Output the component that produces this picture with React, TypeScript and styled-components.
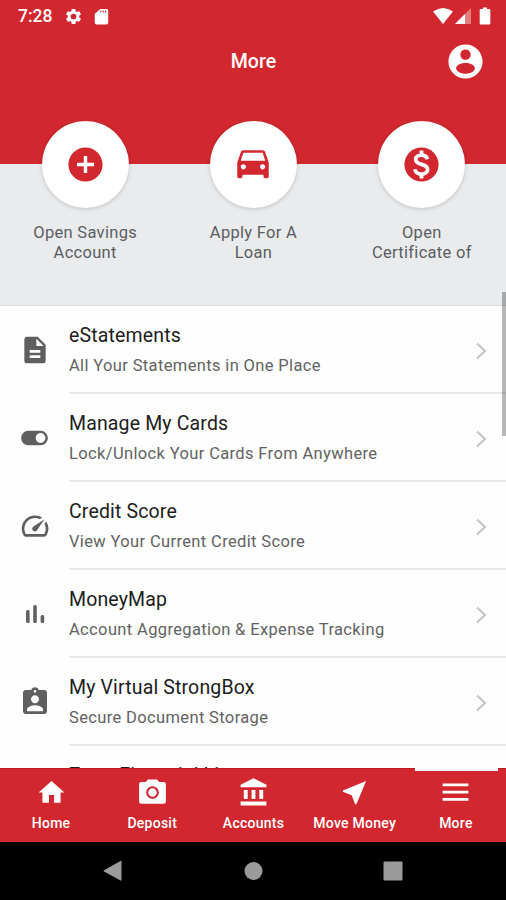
import React from 'react';
import styled, { createGlobalStyle } from 'styled-components';

const RED = '#d3272f';

const GlobalStyle = createGlobalStyle`
  *, *::before, *::after { box-sizing: border-box; }
  body { margin: 0; font-family: Roboto, "Liberation Sans", sans-serif; background: #fff; }
`;

const Screen = styled.div`
  width: 506px;
  height: 900px;
  display: flex;
  flex-direction: column;
  overflow: hidden;
  position: relative;
  background: #fefefe;
`;

const Header = styled.header`
  flex: none;
  height: 164px;
  background: ${RED};
  color: #fff;
`;

const StatusBar = styled.div`
  height: 32px;
  padding: 0 15px 0 18px;
  display: flex;
  align-items: center;
  justify-content: space-between;
`;

const StatusGroup = styled.div<{ $gap: number }>`
  display: flex;
  align-items: center;
  gap: ${(p) => p.$gap}px;
`;

const Clock = styled.span`
  font-size: 17.5px;
  font-weight: 500;
  line-height: 20px;
  margin-right: 3px;
`;

const TitleBar = styled.div`
  height: 58px;
  padding: 0 20px;
  display: grid;
  grid-template-columns: 41px 1fr 41px;
  align-items: center;
`;

const Title = styled.h1`
  margin: 2px 0 0 1px;
  grid-column: 2;
  text-align: center;
  font-size: 19.5px;
  line-height: 24px;
  font-weight: 500;
  letter-spacing: 0.1px;
`;

const Icon = styled.svg<{ $size: number; $color?: string }>`
  display: block;
  flex: none;
  width: ${(p) => p.$size}px;
  height: ${(p) => p.$size}px;
  fill: ${(p) => p.$color ?? 'currentColor'};
`;

const Shortcuts = styled.section`
  flex: none;
  height: 142px;
  background: #e9ebed;
  border-bottom: 1px solid #dcdddf;
  display: grid;
  grid-template-columns: repeat(3, 1fr);
  padding-left: 1px;
`;

const Shortcut = styled.div`
  display: flex;
  flex-direction: column;
  align-items: center;
  margin-top: -43px;
`;

const Disc = styled.div`
  width: 87px;
  height: 87px;
  border-radius: 50%;
  background: #fff;
  display: flex;
  align-items: center;
  justify-content: center;
  box-shadow: 0 1px 4px rgba(0, 0, 0, 0.18);
`;

const ShortcutLabel = styled.div`
  margin-top: 15px;
  text-align: center;
  white-space: pre-line;
  font-size: 16.5px;
  line-height: 20px;
  letter-spacing: 0.3px;
  color: #5b5d60;
`;

const List = styled.main`
  flex: 1;
  min-height: 0;
  overflow: hidden;
`;

const Row = styled.div`
  display: flex;
  height: 88px;
`;

const RowIcon = styled.div`
  width: 69px;
  flex: none;
  display: flex;
  align-items: center;
  justify-content: center;
`;

const RowBody = styled.div`
  flex: 1;
  display: flex;
  align-items: center;
  justify-content: space-between;
  padding: 3px 14px 0 0;
  border-bottom: 2px solid #e8e8e8;
`;

const RowTitle = styled.div`
  font-size: 19.5px;
  line-height: 24px;
  letter-spacing: 0.15px;
  color: #1c1c1c;
  white-space: nowrap;
`;

const RowNote = styled.div`
  margin-top: 7px;
  font-size: 16.5px;
  line-height: 22px;
  letter-spacing: 0.36px;
  color: #626262;
  white-space: nowrap;
`;

const ScrollThumb = styled.div`
  position: absolute;
  right: 0;
  top: 292px;
  width: 4px;
  height: 144px;
  background: rgba(0, 0, 0, 0.28);
`;

const Tabs = styled.nav`
  flex: none;
  height: 74px;
  background: ${RED};
  border-top: 1px solid #bd1a22;
  color: #fff;
  display: grid;
  grid-template-columns: repeat(5, 1fr);
`;

const Tab = styled.div<{ $active?: boolean }>`
  display: flex;
  flex-direction: column;
  align-items: center;
  padding: 8px 0 0 1px;
  position: relative;
  &::before {
    content: '';
    display: ${(p) => (p.$active ? 'block' : 'none')};
    position: absolute;
    top: -1px;
    left: 10px;
    right: 8px;
    height: 3px;
    background: #fff;
  }
`;

const TabLabel = styled.span`
  margin-top: 6px;
  font-size: 14px;
  font-weight: 500;
  line-height: 18px;
  letter-spacing: 0.25px;
  white-space: nowrap;
`;

const SystemNav = styled.footer`
  flex: none;
  height: 58px;
  background: #000;
  display: flex;
  gap: 116px;
  align-items: center;
  justify-content: center;
`;

const PATHS = {
  settings:
    'M19.14 12.94c.04-.3.06-.61.06-.94 0-.32-.02-.64-.07-.94l2.03-1.58c.18-.14.23-.41.12-.61l-1.92-3.32c-.12-.22-.37-.29-.59-.22l-2.39.96c-.5-.38-1.03-.7-1.62-.94l-.36-2.54c-.04-.24-.24-.41-.48-.41h-3.84c-.24 0-.43.17-.47.41l-.36 2.54c-.59.24-1.13.57-1.62.94l-2.39-.96c-.22-.08-.47 0-.59.22L2.74 8.87c-.12.21-.08.47.12.61l2.03 1.58c-.05.3-.09.63-.09.94s.02.64.07.94l-2.03 1.58c-.18.14-.23.41-.12.61l1.92 3.32c.12.22.37.29.59.22l2.39-.96c.5.38 1.03.7 1.62.94l.36 2.54c.05.24.24.41.48.41h3.84c.24 0 .44-.17.47-.41l.36-2.54c.59-.24 1.13-.56 1.62-.94l2.39.96c.22.08.47 0 .59-.22l1.92-3.32c.12-.22.07-.47-.12-.61zM12 15.6A3.6 3.6 0 1 1 12 8.4a3.6 3.6 0 0 1 0 7.2z',
  sdCard: 'M18.500 2.500h-8L3.500 8.500v11.500c0 1.100.9 2 2 2h13c1.100 0 2-.9 2-2V4.500c0-1.100-.9-2-2-2zM10.500 4.500h1.400v2.500h-1.400zm3 0h1.400v2.500h-1.400zm3 0h1.400v2.500h-1.400z',
  account:
    'M12 2C6.48 2 2 6.48 2 12s4.48 10 10 10 10-4.48 10-10S17.52 2 12 2zm0 3c1.66 0 3 1.34 3 3s-1.34 3-3 3-3-1.34-3-3 1.34-3 3-3zm0 14.2c-2.500 0-5.500-1.28-5.500-3.220.030-1.990 3.200-3.080 5.500-3.080s5.470 1.090 5.500 3.080c0 1.940-3 3.220-5.500 3.220z',
  addCircle: 'M12 2C6.48 2 2 6.48 2 12s4.48 10 10 10 10-4.48 10-10S17.52 2 12 2zm5 11h-4v4h-2v-4H7v-2h4V7h2v4h4v2z',
  car: 'M18.920 4.510C18.720 3.920 18.160 3.500 17.500 3.500h-11c-.66 0-1.210.42-1.420 1.010L3 10.500v8c0 .55.45 1 1 1h1c.55 0 1-.45 1-1v-1h12v1c0 .55.45 1 1 1h1c.55 0 1-.45 1-1v-8l-2.080-5.990zM6.500 14.500c-.83 0-1.500-.67-1.500-1.500s.67-1.500 1.500-1.500 1.500.67 1.500 1.500-.67 1.500-1.500 1.500zm11 0c-.83 0-1.500-.67-1.500-1.500s.67-1.500 1.500-1.500 1.500.67 1.500 1.500-.67 1.500-1.500 1.500zM5 9.500l1.500-4.500h11L19 9.500H5z',
  document: 'M14 2H6c-1.1 0-1.99.9-1.99 2L4 20c0 1.1.89 2 1.99 2H18c1.1 0 2-.9 2-2V8l-6-6zm2 16H8v-2h8v2zm0-4H8v-2h8v2zm-3-5V3.5L18.5 9H13z',
  toggle: 'M17 5.500H7c-3.310 0-6 2.690-6 6s2.690 6 6 6h10c3.310 0 6-2.690 6-6s-2.690-6-6-6zm0 10c-2.210 0-4-1.790-4-4s1.790-4 4-4 4 1.790 4 4-1.790 4-4 4z',
  speed: 'M20.38 8.57l-1.23 1.85a8 8 0 0 1-.22 7.58H5.07A8 8 0 0 1 15.58 6.85l1.85-1.23A10 10 0 0 0 3.35 19a2 2 0 0 0 1.72 1h13.85a2 2 0 0 0 1.74-1 10 10 0 0 0-.27-10.44zm-9.79 6.84a2 2 0 0 0 2.83 0l5.66-8.49-8.49 5.66a2 2 0 0 0 0 2.83z',
  badge:
    'M19 3h-4.18C14.4 1.84 13.3 1 12 1c-1.3 0-2.4.84-2.82 2H5c-1.1 0-2 .9-2 2v14c0 1.1.9 2 2 2h14c1.1 0 2-.9 2-2V5c0-1.1-.9-2-2-2zm-7 0c.55 0 1 .45 1 1s-.45 1-1 1-1-.45-1-1 .45-1 1-1zm0 4c1.66 0 3 1.34 3 3s-1.34 3-3 3-3-1.34-3-3 1.34-3 3-3zm6 12H6v-1.4c0-2 4-3.1 6-3.1s6 1.1 6 3.1V19z',
  home: 'M10 20v-6h4v6h5v-8h3L12 3 2 12h3v8z',
  bank: 'M4.500 10v7h3v-7h-3zm6 0v7h3v-7h-3zM2 22h20v-3H2v3zm14.500-12v7h3v-7h-3zM12 1L2 6v2h20V6L12 1z',
  near: 'M21 3L3 10.530v.980l6.840 2.650L12.480 21h.980L21 3z',
  menu: 'M2 5h20v2.200H2zM2 10.600h20v2.200H2zM2 16.200h20v2.200H2z',
};

type IconName = keyof typeof PATHS;

const Glyph = ({ name, size, color }: { name: IconName; size: number; color?: string }) => (
  <Icon viewBox="0 0 24 24" $size={size} $color={color}>
    <path fillRule="evenodd" d={PATHS[name]} />
  </Icon>
);

const DollarIcon = () => (
  <Icon viewBox="0 0 24 24" $size={41} $color={RED}>
    <circle cx="12" cy="12" r="10" />
    <path
      d="M15.500 8.900C15 7.200 13.800 6.500 12 6.500c-2 0-3.400 1-3.400 2.500 0 3.700 7 2.200 7 5.900 0 1.700-1.500 2.700-3.600 2.700-2.200 0-3.600-1-3.900-2.800M12 3.800v3M12 17.200v3"
      fill="none"
      stroke="#fff"
      strokeWidth="2.200"
    />
  </Icon>
);

const BarsIcon = () => (
  <Icon viewBox="0 0 24 24" $size={24} $color="#616161">
    <rect x="3" y="8" width="3.600" height="13" rx="1.500" />
    <rect x="10.200" y="3" width="3.600" height="18" rx="1.500" />
    <rect x="17.600" y="13" width="3.600" height="8" rx="1.500" />
  </Icon>
);

const CameraIcon = () => (
  <Icon viewBox="0 0 31 31" $size={31}>
    <path d="M11 2.500h9l2.300 2.500h4.400a2.200 2.200 0 0 1 2.200 2.200V24.500a2.200 2.200 0 0 1-2.200 2.200H4.300a2.200 2.200 0 0 1-2.200-2.200V7.200A2.200 2.200 0 0 1 4.300 5h4.400z" />
    <circle cx="15.500" cy="15.500" r="5.300" fill="none" stroke={RED} strokeWidth="2.100" />
  </Icon>
);

const Wifi = styled.svg`
  width: 20px;
  height: 16px;
  fill: #fff;
`;
const Signal = styled.svg`
  width: 16px;
  height: 16px;
  fill: #fff;
`;
const Battery = styled.svg`
  width: 12px;
  height: 18px;
  margin-left: 6px;
  fill: #fff;
`;

const Chevron = () => (
  <Icon viewBox="0 0 22 22" $size={22}>
    <path d="M7 3.500l8 7.500-8 7.500" fill="none" stroke="#c4c4c4" strokeWidth="2" />
  </Icon>
);

const GREY = '#5f5f5f';

const shortcuts = [
  { label: 'Open Savings\nAccount', icon: <Glyph name="addCircle" size={41} color={RED} /> },
  { label: 'Apply For A\nLoan', icon: <Glyph name="car" size={42} color={RED} /> },
  { label: 'Open\nCertificate of', icon: <DollarIcon /> },
];

const rows = [
  { title: 'eStatements', note: 'All Your Statements in One Place', icon: <Glyph name="document" size={32} color={GREY} /> },
  { title: 'Manage My Cards', note: 'Lock/Unlock Your Cards From Anywhere', icon: <Glyph name="toggle" size={29} color={GREY} /> },
  { title: 'Credit Score', note: 'View Your Current Credit Score', icon: <Glyph name="speed" size={32} color={GREY} /> },
  { title: 'MoneyMap', note: 'Account Aggregation & Expense Tracking', icon: <BarsIcon /> },
  { title: 'My Virtual StrongBox', note: 'Secure Document Storage', icon: <Glyph name="badge" size={32} color={GREY} /> },
  { title: 'Zogo Financial Literacy', note: '', icon: null },
];

const tabs = [
  { label: 'Home', icon: <Glyph name="home" size={31} /> },
  { label: 'Deposit', icon: <CameraIcon /> },
  { label: 'Accounts', icon: <Glyph name="bank" size={31} /> },
  { label: 'Move Money', icon: <Glyph name="near" size={31} /> },
  { label: 'More', icon: <Glyph name="menu" size={31} />, active: true },
];

export default function App() {
  return (
    <>
      <GlobalStyle />
      <Screen>
        <Header>
          <StatusBar>
            <StatusGroup $gap={9}>
              <Clock>7:28</Clock>
              <Glyph name="settings" size={19} />
              <Glyph name="sdCard" size={19} />
            </StatusGroup>
            <StatusGroup $gap={2}>
              <Wifi viewBox="0 0 20 16">
                <path d="M0 3.500Q10-3.500 20 3.500L10 16z" />
              </Wifi>
              <Signal viewBox="0 0 16 16">
                <path d="M16 0v16H0z" opacity=".4" />
                <path d="M10 6v10H0z" />
              </Signal>
              <Battery viewBox="0 0 12 18">
                <path d="M4 .5h4v1.500h2.500q.8 0 .8 1v13.500q0 1-1 1h-8.600q-1 0-1-1V3q0-1 .8-1H4z" />
              </Battery>
            </StatusGroup>
          </StatusBar>
          <TitleBar>
            <Title>More</Title>
            <Glyph name="account" size={41} />
          </TitleBar>
        </Header>
        <Shortcuts>
          {shortcuts.map((s) => (
            <Shortcut key={s.label}>
              <Disc>{s.icon}</Disc>
              <ShortcutLabel>{s.label}</ShortcutLabel>
            </Shortcut>
          ))}
        </Shortcuts>
        <List>
          {rows.map((r) => (
            <Row key={r.title}>
              <RowIcon>{r.icon}</RowIcon>
              <RowBody>
                <div>
                  <RowTitle>{r.title}</RowTitle>
                  <RowNote>{r.note || '\u00a0'}</RowNote>
                </div>
                <Chevron />
              </RowBody>
            </Row>
          ))}
        </List>
        <Tabs>
          {tabs.map((t) => (
            <Tab key={t.label} $active={t.active}>
              {t.icon}
              <TabLabel>{t.label}</TabLabel>
            </Tab>
          ))}
        </Tabs>
        <SystemNav>
          <Icon viewBox="0 0 24 24" $size={24} $color="#9b9b9b">
            <path d="M20.500 2.500v18.500q0 1-1 .5L3 12.500q-1-.6 0-1.200L19.500 2q1-.5 1 .5z" />
          </Icon>
          <Icon viewBox="0 0 24 24" $size={24} $color="#9b9b9b">
            <circle cx="12.500" cy="12" r="9" />
          </Icon>
          <Icon viewBox="0 0 24 24" $size={24} $color="#9b9b9b">
            <rect x="2.500" y="2.500" width="19" height="19" rx="1" />
          </Icon>
        </SystemNav>
        <ScrollThumb />
      </Screen>
    </>
  );
}
